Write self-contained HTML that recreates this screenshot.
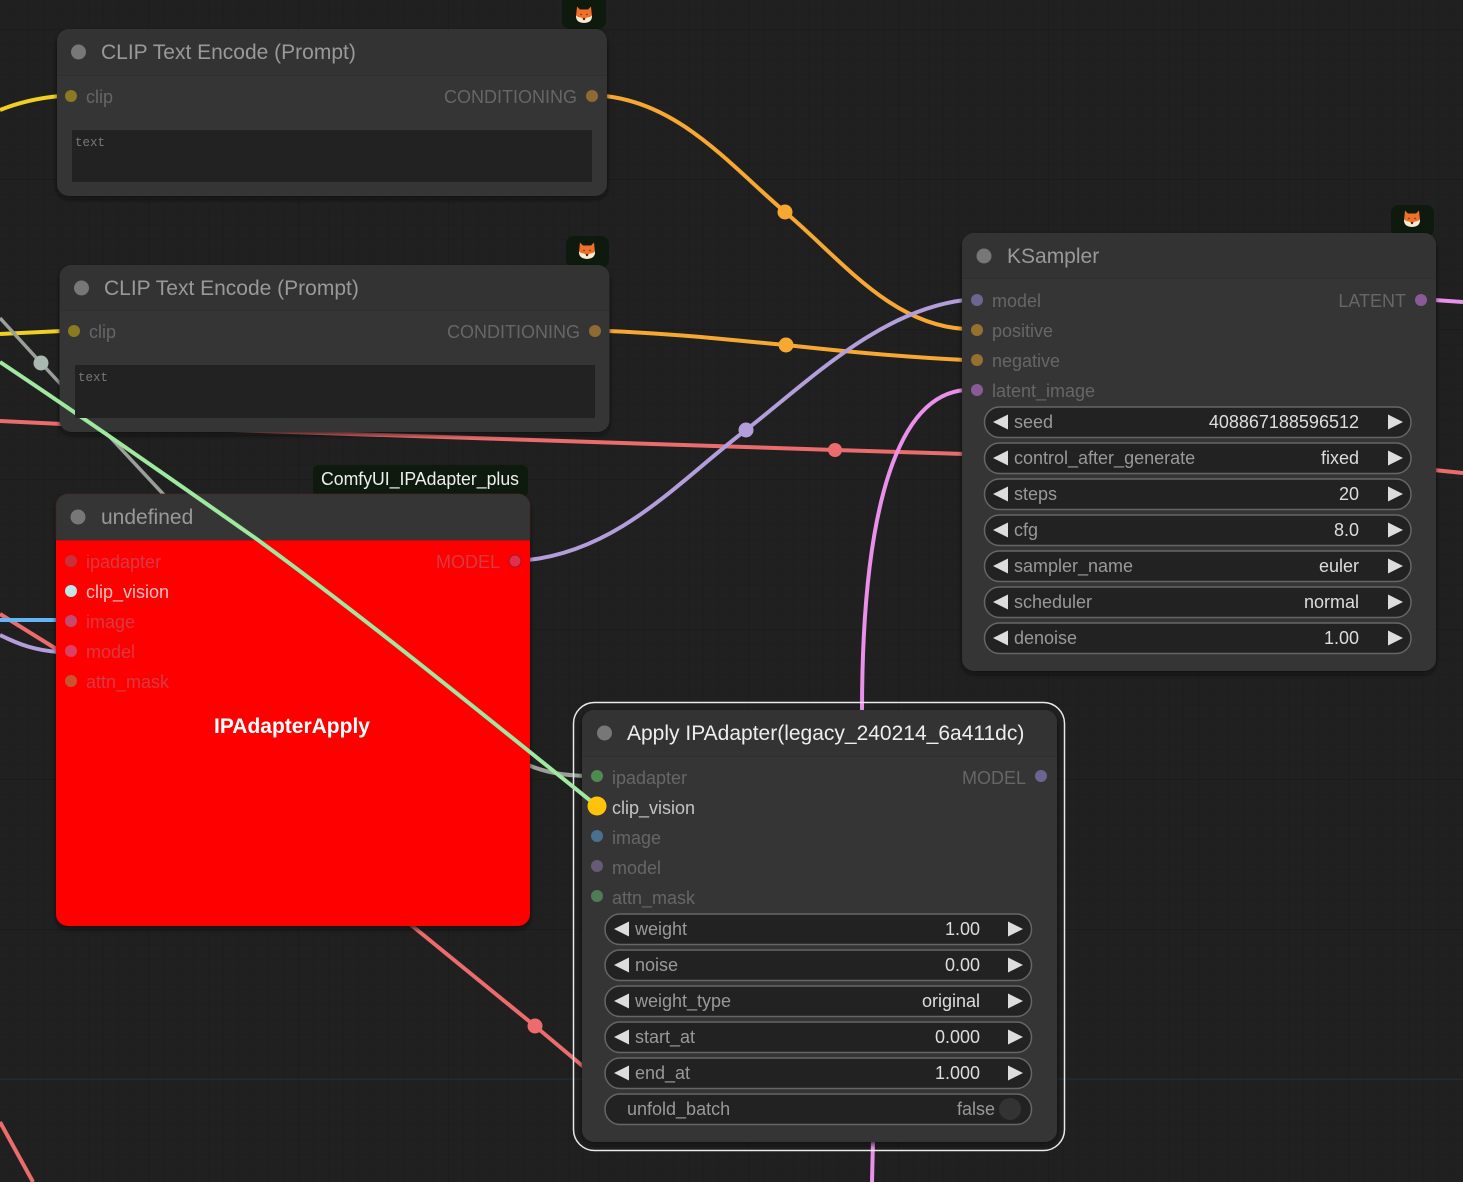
<!DOCTYPE html>
<html lang="en"><head><meta charset="utf-8"><title>ComfyUI</title>
<style>
html,body{margin:0;padding:0;background:#202020;width:1463px;height:1182px;overflow:hidden}
svg{display:block;position:absolute;left:0;top:0;filter:blur(.35px)}
text{font-family:"Liberation Sans",Arial,sans-serif;font-size:18px}
.t{font-size:21px;fill:#999}
.s{fill:#666}
.e{text-anchor:end}
.l{fill:#999}
.v{fill:#ddd;text-anchor:end}
.r{fill:#d63a42}
.m{font-family:"Liberation Mono",monospace;font-size:12.5px;fill:#777}
.lk{fill:none;stroke-width:4;stroke-linecap:butt}
.w{fill:#222;stroke:#666;stroke-width:1.5}
.a{fill:#ddd}
</style></head><body>
<svg width="1463" height="1182" viewBox="0 0 1463 1182" xmlns="http://www.w3.org/2000/svg">
<defs>
<pattern id="g1" width="15" height="15" patternUnits="userSpaceOnUse" x="-2" y="14"><path d="M0 0H15M0 0V15" stroke="#1d1d1d" stroke-width="1" fill="none"/></pattern>
<pattern id="g2" width="150" height="150" patternUnits="userSpaceOnUse" x="148" y="29"><path d="M0 0H150M0 0V150" stroke="#1a1a1a" stroke-width="1.5" fill="none"/></pattern>
<filter id="sh" x="-5%" y="-5%" width="110%" height="110%"><feGaussianBlur stdDeviation="2"/></filter>
</defs>
<rect width="1463" height="1182" fill="#202020"/>
<rect width="1463" height="1182" fill="url(#g1)"/>
<rect width="1463" height="1182" fill="url(#g2)"/>
<rect x="0" y="1078.5" width="1463" height="1.5" fill="#1e2a38"/>

<!-- links -->
<path class="lk" stroke="#f0d020" d="M0 110C20 102 38 98 60 96"/>
<path class="lk" stroke="#f0d020" d="M0 334C20 333 40 332 62 331"/>
<path class="lk" stroke="#9a9f9a" style="stroke-width:3.5" d="M0 318L41 363L165 496"/>
<circle cx="41" cy="363" r="7.5" fill="#a9b8b0"/>
<path class="lk" stroke="#9a9f9a" d="M528 765C545 772 560 775 585 776"/>
<path class="lk" stroke="#ec6c6e" d="M0 421L62 424"/>
<path class="lk" stroke="#ec6c6e" d="M200 429L835 450L965 454"/>
<circle cx="835" cy="450" r="7" fill="#ec6c6e"/>
<path class="lk" stroke="#ec6c6e" d="M1434 470L1463 473"/>
<path class="lk" stroke="#f6a833" d="M605 96C680 104 730 165 785 212C840 258 890 325 965 329"/>
<circle cx="785" cy="212" r="7.5" fill="#f6a833"/>
<path class="lk" stroke="#f6a833" d="M608 331C680 334 730 340 786 345C840 351 900 357 965 360"/>
<circle cx="786" cy="345" r="7.5" fill="#f6a833"/>
<path class="lk" stroke="#b39ddb" d="M528 560C620 550 680 480 746 430C810 380 880 310 965 300"/>
<circle cx="746" cy="430" r="7.5" fill="#b39ddb"/>
<path class="lk" stroke="#ea8fea" d="M965 390C900 395 862 500 862 712"/>
<path class="lk" stroke="#ea8fea" d="M873 1140L872 1182"/>
<path class="lk" stroke="#ea8fea" d="M1434 300L1463 302"/>
<path class="lk" stroke="#ec6c6e" d="M405 920L535 1026L585 1068"/>
<circle cx="535" cy="1026" r="7.5" fill="#ec6c6e"/>
<path class="lk" stroke="#ec6c6e" d="M0 1122L33 1182"/>
<path class="lk" stroke="#ec6c6e" d="M0 614L58 650"/>
<path class="lk" stroke="#64b5f6" d="M0 620H58"/>
<path class="lk" stroke="#b39ddb" d="M0 635C20 645 35 650 58 652"/>

<!-- selection outline -->
<rect x="573.5" y="702.5" width="491" height="448" rx="21" fill="none" stroke="#e8e8e8" stroke-width="1.5"/>

<!-- badges -->
<rect x="562" y="-8" width="44" height="37" rx="8" fill="#0e1a0e"/>
<rect x="566" y="236" width="43" height="32" rx="8" fill="#0e1a0e"/>
<rect x="1391" y="205" width="43" height="32" rx="8" fill="#0e1a0e"/>
<rect x="313" y="465" width="215" height="32" rx="6" fill="#0e1a0e"/>
<text x="321" y="485" fill="#eee" textLength="198" lengthAdjust="spacingAndGlyphs">ComfyUI_IPAdapter_plus</text>

<g transform="translate(584,14.500)"><path fill="#f0702a" d="M-7-8L-4-5H4L7-8L8 2Q4 5 0 6Q-4 5-8 2Z"/><path fill="#f7ecd2" d="M-8 1Q-6 3-3 3L0 5L3 3Q6 3 8 1Q8.500 8 0 8.500Q-8.500 8-8 1Z"/><circle cy="4.500" r="1.200" fill="#4a2a1a"/><circle cx="-3" cy="0" r=".7" fill="#4a2a1a"/><circle cx="3" cy="0" r=".7" fill="#4a2a1a"/></g>
<g transform="translate(587,250.500)"><path fill="#f0702a" d="M-7-8L-4-5H4L7-8L8 2Q4 5 0 6Q-4 5-8 2Z"/><path fill="#f7ecd2" d="M-8 1Q-6 3-3 3L0 5L3 3Q6 3 8 1Q8.500 8 0 8.500Q-8.500 8-8 1Z"/><circle cy="4.500" r="1.200" fill="#4a2a1a"/><circle cx="-3" cy="0" r=".7" fill="#4a2a1a"/><circle cx="3" cy="0" r=".7" fill="#4a2a1a"/></g>
<g transform="translate(1412,218.500)"><path fill="#f0702a" d="M-7-8L-4-5H4L7-8L8 2Q4 5 0 6Q-4 5-8 2Z"/><path fill="#f7ecd2" d="M-8 1Q-6 3-3 3L0 5L3 3Q6 3 8 1Q8.500 8 0 8.500Q-8.500 8-8 1Z"/><circle cy="4.500" r="1.200" fill="#4a2a1a"/><circle cx="-3" cy="0" r=".7" fill="#4a2a1a"/><circle cx="3" cy="0" r=".7" fill="#4a2a1a"/></g>

<!-- Node A -->
<rect x="57" y="32" width="550" height="167" rx="12" fill="#101010" opacity=".7" filter="url(#sh)"/>
<rect x="57" y="29" width="550" height="167" rx="12" fill="#353535"/>
<path d="M57 75V41a12 12 0 0 1 12-12H595a12 12 0 0 1 12 12V75Z" fill="#333"/>
<rect x="57" y="75" width="550" height="1" fill="#2f2f2f"/>
<circle cx="78.500" cy="52" r="7.500" fill="#777"/>
<text class="t" x="101" y="59">CLIP Text Encode (Prompt)</text>
<circle cx="71" cy="96" r="6" fill="#8a7a20"/>
<text class="s" x="86" y="103">clip</text>
<text class="s e" x="577" y="103">CONDITIONING</text>
<circle cx="592" cy="96" r="6" fill="#8f6a35"/>
<rect x="72" y="130" width="520" height="52" fill="#222"/>
<text class="m" x="75" y="146" textLength="30">text</text>

<!-- Node B -->
<rect x="59.500" y="268" width="550" height="167" rx="12" fill="#101010" opacity=".7" filter="url(#sh)"/>
<rect x="59.500" y="265" width="550" height="167" rx="12" fill="#353535"/>
<path d="M59.500 310V277a12 12 0 0 1 12-12H597.500a12 12 0 0 1 12 12V310Z" fill="#333"/>
<rect x="59.500" y="310" width="550" height="1" fill="#2f2f2f"/>
<circle cx="81.500" cy="288" r="7.500" fill="#777"/>
<text class="t" x="104" y="295">CLIP Text Encode (Prompt)</text>
<circle cx="74" cy="331" r="6" fill="#8a7a20"/>
<text class="s" x="89" y="338">clip</text>
<text class="s e" x="580" y="338">CONDITIONING</text>
<circle cx="595" cy="331" r="6" fill="#8f6a35"/>

<!-- KSampler -->
<rect x="962" y="236" width="474" height="438" rx="12" fill="#101010" opacity=".7" filter="url(#sh)"/>
<rect x="962" y="233" width="474" height="438" rx="12" fill="#353535"/>
<path d="M962 278V245a12 12 0 0 1 12-12H1424a12 12 0 0 1 12 12V278Z" fill="#333"/>
<rect x="962" y="278" width="474" height="1" fill="#2f2f2f"/>
<circle cx="984" cy="256" r="7.500" fill="#777"/>
<text class="t" x="1007" y="263">KSampler</text>
<circle cx="977" cy="300" r="6" fill="#6d6590"/><text class="s" x="992" y="307">model</text>
<circle cx="977" cy="330" r="6" fill="#96702f"/><text class="s" x="992" y="337">positive</text>
<circle cx="977" cy="360" r="6" fill="#96702f"/><text class="s" x="992" y="367">negative</text>
<circle cx="977" cy="390" r="6" fill="#8a5a96"/><text class="s" x="992" y="397">latent_image</text>
<text class="s e" x="1406" y="307">LATENT</text><circle cx="1421" cy="300" r="6" fill="#8a5a96"/>

<rect class="w" x="984.500" y="407" width="426.500" height="30.500" rx="15"/>
<path class="a" d="M993 422L1008 414.500V429.500Z"/><path class="a" d="M1403 422L1388 414.500V429.500Z"/>
<text class="l" x="1014" y="428">seed</text><text class="v" x="1359" y="428">408867188596512</text>
<rect class="w" x="984.500" y="443" width="426.500" height="30.500" rx="15"/>
<path class="a" d="M993 458L1008 450.500V465.500Z"/><path class="a" d="M1403 458L1388 450.500V465.500Z"/>
<text class="l" x="1014" y="464">control_after_generate</text><text class="v" x="1359" y="464">fixed</text>
<rect class="w" x="984.500" y="479" width="426.500" height="30.500" rx="15"/>
<path class="a" d="M993 494L1008 486.500V501.500Z"/><path class="a" d="M1403 494L1388 486.500V501.500Z"/>
<text class="l" x="1014" y="500">steps</text><text class="v" x="1359" y="500">20</text>
<rect class="w" x="984.500" y="515" width="426.500" height="30.500" rx="15"/>
<path class="a" d="M993 530L1008 522.500V537.500Z"/><path class="a" d="M1403 530L1388 522.500V537.500Z"/>
<text class="l" x="1014" y="536">cfg</text><text class="v" x="1359" y="536">8.0</text>
<rect class="w" x="984.500" y="551" width="426.500" height="30.500" rx="15"/>
<path class="a" d="M993 566L1008 558.500V573.500Z"/><path class="a" d="M1403 566L1388 558.500V573.500Z"/>
<text class="l" x="1014" y="572">sampler_name</text><text class="v" x="1359" y="572">euler</text>
<rect class="w" x="984.500" y="587" width="426.500" height="30.500" rx="15"/>
<path class="a" d="M993 602L1008 594.500V609.500Z"/><path class="a" d="M1403 602L1388 594.500V609.500Z"/>
<text class="l" x="1014" y="608">scheduler</text><text class="v" x="1359" y="608">normal</text>
<rect class="w" x="984.500" y="623" width="426.500" height="30.500" rx="15"/>
<path class="a" d="M993 638L1008 630.500V645.500Z"/><path class="a" d="M1403 638L1388 630.500V645.500Z"/>
<text class="l" x="1014" y="644">denoise</text><text class="v" x="1359" y="644">1.00</text>

<!-- undefined (red) node -->
<rect x="56" y="497" width="474" height="432" rx="12" fill="#101010" opacity=".7" filter="url(#sh)"/>
<rect x="56" y="494" width="474" height="432" rx="12" fill="#f00"/>
<path d="M56 540V506a12 12 0 0 1 12-12H518a12 12 0 0 1 12 12V540Z" fill="#353535" stroke="#4a2626" stroke-width=".8"/>
<circle cx="78" cy="517" r="7.500" fill="#777"/>
<text class="t" x="101" y="524">undefined</text>
<circle cx="71" cy="561" r="6" fill="#c8303a"/><text class="r" x="86" y="568">ipadapter</text>
<circle cx="71" cy="591" r="6" fill="#bfe6ea"/><text x="86" y="598" fill="#f0c0c0">clip_vision</text>
<circle cx="71" cy="621" r="6" fill="#c44a70"/><text class="r" x="86" y="628">image</text>
<circle cx="71" cy="651" r="6" fill="#dc4064"/><text class="r" x="86" y="658">model</text>
<circle cx="71" cy="681" r="6" fill="#c85530"/><text class="r" x="86" y="688">attn_mask</text>
<text class="r e" x="500" y="568">MODEL</text>
<circle cx="515" cy="561" r="6" fill="#e0304c" stroke="#a01828" stroke-width="1"/>
<text x="292" y="733" fill="#fff" text-anchor="middle" style="font-size:21px;font-weight:bold">IPAdapterApply</text>

<!-- Apply IPAdapter -->
<rect x="582" y="713" width="475" height="432" rx="12" fill="#101010" opacity=".7" filter="url(#sh)"/>
<rect x="582" y="710" width="475" height="432" rx="12" fill="#353535"/>
<path d="M582 756V722a12 12 0 0 1 12-12H1045a12 12 0 0 1 12 12V756Z" fill="#333"/>
<rect x="582" y="756" width="475" height="1" fill="#2f2f2f"/>
<circle cx="604.500" cy="733" r="7.500" fill="#777"/>
<text class="t" x="627" y="740" style="fill:#eee">Apply IPAdapter(legacy_240214_6a411dc)</text>
<circle cx="597" cy="776" r="6" fill="#4f8a4f"/><text class="s" x="612" y="784">ipadapter</text>
<text x="612" y="814" fill="#c4c4c4">clip_vision</text>
<circle cx="597" cy="836" r="6" fill="#4a6f8f"/><text class="s" x="612" y="844">image</text>
<circle cx="597" cy="866" r="6" fill="#665a78"/><text class="s" x="612" y="874">model</text>
<circle cx="597" cy="896" r="6" fill="#527a55"/><text class="s" x="612" y="904">attn_mask</text>
<text class="s e" x="1026" y="784">MODEL</text><circle cx="1041" cy="776" r="6" fill="#6d6590"/>

<rect class="w" x="605" y="914" width="426.500" height="30.500" rx="15"/>
<path class="a" d="M614 929L629 921.500V936.500Z"/><path class="a" d="M1023 929L1008 921.500V936.500Z"/>
<text class="l" x="635" y="935">weight</text><text class="v" x="980" y="935">1.00</text>
<rect class="w" x="605" y="950" width="426.500" height="30.500" rx="15"/>
<path class="a" d="M614 965L629 957.500V972.500Z"/><path class="a" d="M1023 965L1008 957.500V972.500Z"/>
<text class="l" x="635" y="971">noise</text><text class="v" x="980" y="971">0.00</text>
<rect class="w" x="605" y="986" width="426.500" height="30.500" rx="15"/>
<path class="a" d="M614 1001L629 993.500V1008.500Z"/><path class="a" d="M1023 1001L1008 993.500V1008.500Z"/>
<text class="l" x="635" y="1007">weight_type</text><text class="v" x="980" y="1007">original</text>
<rect class="w" x="605" y="1022" width="426.500" height="30.500" rx="15"/>
<path class="a" d="M614 1037L629 1029.500V1044.500Z"/><path class="a" d="M1023 1037L1008 1029.500V1044.500Z"/>
<text class="l" x="635" y="1043">start_at</text><text class="v" x="980" y="1043">0.000</text>
<rect class="w" x="605" y="1058" width="426.500" height="30.500" rx="15"/>
<path class="a" d="M614 1073L629 1065.500V1080.500Z"/><path class="a" d="M1023 1073L1008 1065.500V1080.500Z"/>
<text class="l" x="635" y="1079">end_at</text><text class="v" x="980" y="1079">1.000</text>
<rect class="w" x="605" y="1094" width="426.500" height="30.500" rx="15"/>
<text class="l" x="627" y="1115">unfold_batch</text><text class="e l" x="995" y="1115">false</text>
<circle cx="1010" cy="1109" r="11" fill="#333"/>

<!-- highlighted link -->
<path fill="none" stroke="#9fe89f" stroke-width="4" d="M0 362C90 422 170 478 258 540C370 622 480 712 597 806"/>
<circle cx="597" cy="806" r="9.500" fill="#ffc40a"/>

<!-- Node B textarea sits above the canvas -->
<rect x="75" y="365" width="520" height="53" fill="#222"/>
<text class="m" x="78" y="381" textLength="30">text</text>
</svg>
</body></html>
